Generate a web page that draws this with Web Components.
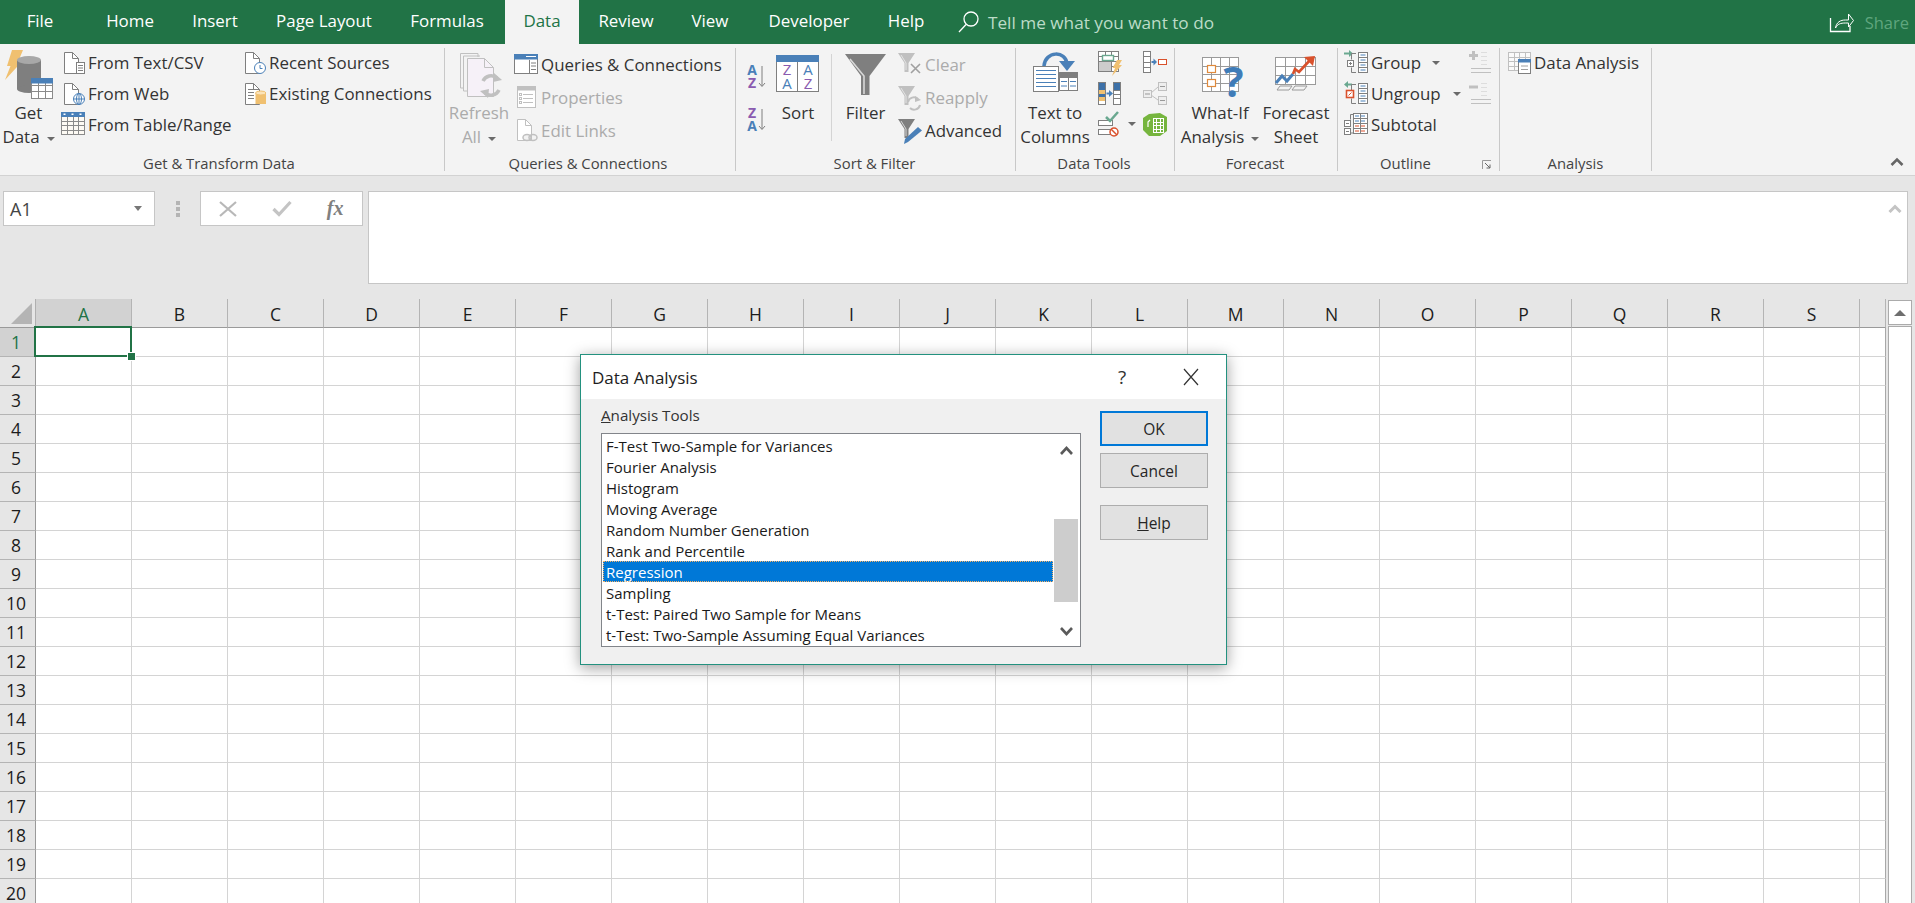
<!DOCTYPE html>
<html lang="en"><head><meta charset="utf-8"><title>Excel – Data Analysis</title>
<style>
html,body{margin:0;padding:0;height:903px;overflow:hidden;background:#e6e6e6}
body{font-family:"Open Sans","Noto Sans",sans-serif;color:#262626;position:relative}
</style></head><body>
<x-titlebar>
  <x-tab style="width:80px">File</x-tab><x-tab style="width:100px">Home</x-tab><x-tab style="width:70px">Insert</x-tab><x-tab style="width:148px">Page Layout</x-tab><x-tab style="width:98px">Formulas</x-tab><x-tab active style="width:74px;margin-left:9px">Data</x-tab><x-tab style="width:94px">Review</x-tab><x-tab style="width:74px">View</x-tab><x-tab style="width:124px">Developer</x-tab><x-tab style="width:70px">Help</x-tab>
</x-titlebar>
<x-ribbon>
  <x-group label="Get &amp; Transform Data" style="width:445px;--lp:6px">
    <x-large icon="getdata" style="width:57px">Get<br>Data<x-caret></x-caret></x-large>
    <x-col style="margin:-1px 0 0 4px;width:181px"><x-small icon="fromtext">From Text/CSV</x-small><x-small icon="fromweb">From Web</x-small><x-small icon="fromtable">From Table/Range</x-small></x-col>
    <x-col style="margin-top:-1px"><x-small icon="recent">Recent Sources</x-small><x-small icon="existing">Existing Connections</x-small></x-col>
  </x-group>
  <x-group label="Queries &amp; Connections" style="width:291px;--lp:4px">
    <x-large icon="refresh" disabled style="width:68px">Refresh<br>All<x-caret></x-caret></x-large>
    <x-col style="margin-left:1px;--row:33px"><x-small icon="queries">Queries &amp; Connections</x-small><x-small icon="properties" disabled>Properties</x-small><x-small icon="editlinks" disabled>Edit Links</x-small></x-col>
  </x-group>
  <x-group label="Sort &amp; Filter" style="width:280px;--lp:2px">
    <x-col style="margin:6px 0 0 9px;--row:43px"><x-icon name="az"></x-icon><x-icon name="za"></x-icon></x-col>
    <x-large icon="sort" style="width:44px;margin-left:10px">Sort</x-large>
    <x-vrule style="margin:6px 13px 0 11px"></x-vrule>
    <x-large icon="filter" style="width:41px">Filter</x-large>
    <x-col style="margin-left:12px;--row:33px"><x-small icon="clear" disabled>Clear</x-small><x-small icon="reapply" disabled>Reapply</x-small><x-small icon="advanced">Advanced</x-small></x-col>
  </x-group>
  <x-group label="Data Tools" style="width:159px;--lp:2px">
    <x-large icon="textcol" style="width:70px;margin-left:4px">Text to<br>Columns</x-large>
    <x-col style="margin:-2px 0 0 8px;width:45px"><x-icon name="flash"></x-icon><x-icon name="dupes"></x-icon><x-row><x-icon name="valid"></x-icon><x-caret style="margin-left:6px"></x-caret></x-row></x-col>
    <x-col style="margin-top:-2px"><x-icon name="consol"></x-icon><x-icon name="relat"></x-icon><x-icon name="model"></x-icon></x-col>
  </x-group>
  <x-group label="Forecast" style="width:163px;--lp:2px">
    <x-large icon="whatif" style="width:80px;margin-left:5px">What-If<br>Analysis<x-caret></x-caret></x-large>
    <x-large icon="fsheet" style="width:72px">Forecast<br>Sheet</x-large>
  </x-group>
  <x-group label="Outline" launcher style="width:162px;--lp:26px">
    <x-col style="margin:-1px 0 0 6px;width:125px"><x-small icon="group" caret style="width:96px">Group</x-small><x-small icon="ungroup" caret style="width:117px">Ungroup</x-small><x-small icon="subtotal">Subtotal</x-small></x-col>
    <x-col style="margin-top:-1px"><x-icon name="showd"></x-icon><x-icon name="hided"></x-icon></x-col>
  </x-group>
  <x-group label="Analysis" style="width:152px;--lp:0px">
    <x-col style="margin:-1px 0 0 7px"><x-small icon="analysis">Data Analysis</x-small></x-col>
  </x-group>
  <x-collapse></x-collapse>
</x-ribbon>
<x-formulabar></x-formulabar>
<x-sheet></x-sheet>
<x-dialog heading="Data Analysis">
  <x-button slot="buttons" focused>OK</x-button>
  <x-button slot="buttons">Cancel</x-button>
  <x-button slot="buttons" style="margin-top:10px"><u>H</u>elp</x-button>
</x-dialog>
<script>
const G='#7f7f7f',B='#4a80b8',P='#8a5bb0',O='#f0c070',T='#6aa890',R='#d9512c',L='#c0c0c0';
const FF='"Open Sans","Noto Sans",sans-serif';
const r=(x,y,w,h,f,s,sw=1)=>`<rect x="${x}" y="${y}" width="${w}" height="${h}" fill="${f||'none'}"${s?` stroke="${s}" stroke-width="${sw}"`:''}/>`;
const l=(d,s,sw=1)=>`<path d="${d}" fill="none" stroke="${s}" stroke-width="${sw}"/>`;
const pg=(pts,f)=>`<polygon points="${pts}" fill="${f}"/>`;
const c=(x,y,rd,f,s,sw=1)=>`<circle cx="${x}" cy="${y}" r="${rd}" fill="${f||'none'}"${s?` stroke="${s}" stroke-width="${sw}"`:''}/>`;
const t=(x,y,str,f,sz,wt=700)=>`<text x="${x}" y="${y}" fill="${f}" font-size="${sz}" font-weight="${wt}" font-family='${FF}' text-anchor="middle">${str}</text>`;
const doc=(x,y,w,h,s=G,f='#fff',fd=6)=>`<path d="M${x} ${y}H${x+w-fd}L${x+w} ${y+fd}V${y+h}H${x}Z" fill="${f}" stroke="${s}"/><path d="M${x+w-fd} ${y}V${y+fd}H${x+w}" fill="none" stroke="${s}"/>`;
const grid=(x,y,w,h,cs,rs,s=G,f='#fff')=>{let o=r(x,y,w,h,f,s);for(let i=1;i<cs;i++){const X=x+Math.round(w*i/cs);o+=l(`M${X} ${y}V${y+h}`,s)}for(let i=1;i<rs;i++){const Y=y+Math.round(h*i/rs);o+=l(`M${x} ${Y}H${x+w}`,s)}return o};
const funnel=(x,y,f)=>pg(`${x},${y} ${x+17},${y} ${x+10.5},${y+10} ${x+10.5},${y+19} ${x+6.5},${y+19} ${x+6.5},${y+10}`,f)+l(`M${x+3} ${y+2}L${x+8} ${y+10}V${y+17}`,'#eee',.8);
const lines=(x,ys,w,s=G)=>ys.map(y=>l(`M${x} ${y}h${w}`,s)).join('');
const outlineCol=(x,y)=>r(x+.5,y+.5,9,20,'#fff',G)+l(`M${x} ${y+5.5}h10M${x} ${y+10.5}h10M${x} ${y+15.5}h10`,G)+l(`M${x+2.5} ${y+3}h5M${x+2.5} ${y+8}h5M${x+2.5} ${y+13}h5M${x+2.5} ${y+18}h5`,B,1.2);
const ICONS={
 getdata:['0 48 58 53',pg('12,50 23,50 18,62 21.5,62 5,80 10.5,66 7,66',O)+r(17,60,24,29,'#7f7f7f')+`<ellipse cx="29" cy="89" rx="12" ry="4" fill="#7f7f7f"/><ellipse cx="29" cy="60" rx="12" ry="4" fill="#a8a8a8"/>`+grid(31.5,78.5,21,20,3,3,'#8a8a8a')+r(31,78,22,5.5,B)],
 fromtext:['61 50 24 26',doc(64.5,52.5,14,21)+r(76.5,62.5,8,11,'#fff',G)+lines(78,[65.5,68,70.5],5)],
 fromweb:['61 81 24 26',doc(64.5,83.5,14,21)+c(79,99,5.5,'#fff',B)+l('M73.5 99h11M79 93.5v11',B)+`<ellipse cx="79" cy="99" rx="2.5" ry="5.5" fill="none" stroke="${B}"/>`],
 fromtable:['61 112 24 26',grid(61.5,112.5,23,22,4,5,'#8a8a8a','#fdfaf4')+r(61,112,24,5,B)+r(63.5,113.5,2,1.5,'#fff')+r(71.5,113.5,2,1.5,'#fff')+r(79.5,113.5,2,1.5,'#fff')],
 recent:['242 50 24 26',doc(245.5,52.5,14,21)+c(260,68,5.5,'#fff',B)+l('M260 65v3.5h2.5',B)],
 existing:['242 81 24 26',doc(245.5,83.5,14,21)+lines(248,[89.5,92.5,95.5,98.5],6)+r(255.5,93,10.5,11,O)+`<ellipse cx="260.7" cy="93" rx="5.2" ry="2" fill="#fbe3b8" stroke="${O}"/>`],
 refresh:['445 48 68 53',l('M460.5 53.5H478V57M460.5 53.5V88H464',L)+l('M463.5 56H480M463.5 56V91H467',L)+doc(467.5,58.5,26,38,L,'#f6f1f8',9)+l('M483 81a9 9 0 0 1 14-3',L,3.5)+pg('494,73 502,80 493,82',L)+l('M499 90a9 9 0 0 1-14 3',L,3.5)+pg('488,98 480,91 489,89',L)],
 queries:['514 52 24 26',r(514.5,54.5,23,19,'#fff',G)+r(514,54,24,5.5,B)+l('M526 56.5h10','#fff',1)+l('M529.5 60v13',G)+lines(531,[63,66,69.5],5)],
 properties:['514 85 24 26',r(517.5,86.5,18,21,'#fff',L)+r(517,86,19,4.5,L)+r(519.5,93.5,2,2,'none',L)+r(519.5,97.5,2,2,'none',L)+r(519.5,101.5,2,2,'none',L)+lines(523,[94.5,98.5,102.5],10,L)],
 editlinks:['514 118 24 26',doc(517.5,119.5,14,21,L)+`<ellipse cx="527" cy="137.5" rx="4" ry="3" fill="#f3f3f3" stroke="${L}" stroke-width="1.5"/><ellipse cx="533" cy="137.5" rx="4" ry="3" fill="none" stroke="${L}" stroke-width="1.5"/>`],
 az:['745 64 21 24',t(752,75,'A',B,14)+t(752,87.5,'Z',P,14)+l('M762 66V86',G)+l('M759 83l3 3.5 3-3.5',G)],
 za:['745 107 21 24',t(752,118,'Z',P,14)+t(752,130.5,'A',B,14)+l('M762 109V129',G)+l('M759 126l3 3.5 3-3.5',G)],
 sort:['776 48 44 53',r(776.5,55.5,42,36,'#fff',G)+r(776,55,43,7,B)+l('M797.5 62V91',G)+t(787,75,'Z',P,15,400)+t(787,89,'A',B,15,400)+t(808,75,'A',B,15,400)+t(808,89,'Z',P,15,400)],
 filter:['845 48 41 53',pg('845,54 886,54 869.5,76 869.5,95 861,95 861,76',G)+l('M850 59L864 76V94','#d8d8d8',1.6)],
 clear:['898 52 24 26',funnel(898,53,L)+l('M911 64l9 9M920 64l-9 9','#a0a0a0',1.6)],
 reapply:['898 85 24 26',funnel(898,86,L)+l('M908 102a6 6 0 0 1 10-3',L,2)+pg('915,96 921,100 915,102',L)+l('M920 105a6 6 0 0 1-10 3',L,2)],
 advanced:['898 118 24 26',funnel(898,119,G)+pg('918,127 922,130.5 908,142 904,144 905,139',B)],
 textcol:['1020 48 70 53',r(1033.5,66.5,25,25,'#fff',G)+lines(1036,[70.5,74.5,78.5,82.5,86.5],20,B)+r(1059.5,75.5,18,15,'#fff',G)+r(1059,72,19,6,G)+l('M1068.5 78v12',G)+lines(1061,[81.5,86],6,B)+lines(1070,[81.5,86],6,B)+l('M1044 66C1045 51 1066 50 1067 64',B,3.5)+pg('1059,61 1075,61 1067,71',B)],
 flash:['1098 49 24 26',grid(1098.5,51.5,20,20,3,4,G)+r(1098.5,61.5,13,10,'#ccc',G)+r(1102.5,55.5,11,5,'#fff',T,1.4)+pg('1117,60 1122,60 1119,65 1122,65 1112,76 1115,68 1112.5,68',O)],
 dupes:['1098 80 24 26',r(1098.5,82.5,7,22,'#fff',G)+r(1099,83,6,7,'#3d71a8')+r(1099,90,6,4,O)+r(1099,94,6,3,'#3d71a8')+r(1099,97,6,4,O)+r(1113.5,82.5,7,22,'#fff',G)+r(1114,83,6,7,'#3d71a8')+lines(1113,[90.5,94.5,98.5],8,G)+l('M1106.5 93.5h4',B,2)+pg('1109,90 1113,93.5 1109,97',B)],
 valid:['1098 110 24 26',r(1098.5,119.5,14,5,'#fff',G)+r(1098.5,128.5,14,5,'#fff',G)+l('M1106 116l4 4 8-9',T,2.5)+c(1114,131,4,'#fff',R,1.5)+l('M1111 128l6 6',R,1.5)],
 consol:['1143 49 24 26',grid(1143.5,51.5,7,21,1,4,G)+l('M1151.5 62h3',B,2)+pg('1153.5,58.5 1157,62 1153.5,65.5',B)+r(1158.5,59.5,8,5,'#fff',R)],
 relat:['1143 80 24 26',r(1143.5,90.5,8,7,'#eee',L)+r(1158.5,82.5,8,8,'#eee',L)+r(1158.5,96.5,8,8,'#eee',L)+l('M1151 93l7-6M1151 95l7 5',L)+lines(1145,[94],5,'#999')+lines(1160,[86.5,100.5],5,'#999')],
 model:['1143 110 24 26',pg('1149,113 1160,112 1167,116 1167,130 1160,135 1149,135 1143,129 1143,117','#76b53e')+grid(1153.5,117.5,10,14,3,4,'#fff','none')+l('M1148 126v-5l2-2','#fff',1.2)],
 whatif:['1180 48 80 53',grid(1202.5,57.5,36,34,4,4,'#9a9a9a')+r(1207.5,65.5,8,7,'#fff','#e08a3c',1.2)+r(1207.5,79.5,8,7,'#fff','#e08a3c',1.2)+t(1233.5,97,'?','#3f7cb8',42)],
 fsheet:['1260 48 72 53',grid(1275.5,57.5,40,27,4,3,'#9a9a9a')+l('M1277 90l3-4h12l-3 4zM1292 90l3-4h12l-3 4z','#9a9a9a')+l('M1276 83l6-7 5 5 6-7',B,3)+l('M1293 74l2-5 4 3 12-13',R,2.6)+pg('1304,57 1315,56 1313,66',R)],
 group:['1344 50 24 26',l('M1344 53.5h6',T,2)+pg('1349,50 1353,53.5 1349,57',T)+outlineCol(1358,52)+l('M1356 53.5h-4.5v6M1351.5 67.5v5h4.5',G)+r(1347.5,60.5,6,6,'#fff',G)+l('M1349 63.5h3M1350.5 62v3',G)],
 ungroup:['1344 81 24 26',l('M1346 84.5h6',T,2)+pg('1348,81 1344,84.5 1348,88',T)+outlineCol(1358,83)+l('M1356 84.5h-4.5v6M1351.5 98.5v5h4.5',G)+r(1346.5,90.5,7,7,'#fff',R,1.6)+l('M1348.5 95.5l3-3',R)],
 subtotal:['1344 112 24 26',l('M1354 114.5h-3.5v5M1350.5 128v5h3.5',G)+r(1344.5,120.5,6,6,'#fff',G)+r(1344.5,128.5,6,6,'#fff',G)+grid(1353.5,113.5,14,20,2,4,G)+lines(1355,[116,121],4,B)+lines(1361,[116,121],4,B)+lines(1355,[126,131],4,R)+lines(1361,[126,131],4,R)+l('M1346 123.5h3M1346 131.5h3',G)],
 showd:['1469 50 24 26',l('M1469 55.5h9M1473.5 51v9',L,3)+lines(1481,[52.5,56.5,60.5,64.5],6,'#ddd')+lines(1471,[68.5,72.5],20,L)],
 hided:['1469 81 24 26',l('M1469 87h9',L,3)+lines(1481,[83.5,87.5,91.5,95.5],6,'#ddd')+lines(1471,[99.5,103.5],20,L)],
 analysis:['1507 50 24 26',grid(1508.5,52.5,22,18,4,4,L,'#fafafa')+r(1518.5,59.5,12,14,'#fff',G)+r(1518,59,13,3.5,B)+lines(1521,[66,69.5],7,'#a0a0a0')],
 search:['957 8 26 26',c(971,18,7,'none','#fff',1.3)+l('M966 23.5L959 31','#fff',1.3)],
 share:['1828 10 28 26',l('M1830.5 19V32.5H1850V27','#fff',1.3)+l('M1835.5 29c1-6 5-8 10-8h3V15l5 6.5-5 6.5V24h-3c-5 0-8 1-10 5z','#fff',1)]
};
function def(name,css,html,extra){
  const tpl=document.createElement('template');tpl.innerHTML=`<style>${css}</style>${html}`;
  customElements.define(name,class extends HTMLElement{
    constructor(){super();this.attachShadow({mode:'open'}).append(tpl.content.cloneNode(true))}
    connectedCallback(){extra&&extra(this,this.shadowRoot)}
  });
}
def('x-icon',':host{display:block;flex:none;line-height:0}svg{display:block;overflow:visible}','<span></span>',(h,s)=>{
  const d=ICONS[h.getAttribute('name')];if(!d)return;const [vb,body]=d;const [,, w,ht]=vb.split(' ');
  s.querySelector('span').innerHTML=`<svg xmlns="http://www.w3.org/2000/svg" viewBox="${vb}" width="${w}" height="${ht}">${body}</svg>`;
});
def('x-caret',':host{display:inline-block;width:0;height:0;border:4px solid transparent;border-top:4.5px solid #6a6a6a;border-bottom:0;margin-left:7px;vertical-align:2px;flex:none}','');
def('x-tab',`:host{display:flex;align-items:center;justify-content:center;flex:none;height:44px;padding-bottom:4px;box-sizing:border-box;color:#fff;font-size:16.9px}
:host([active]){background:#f3f3f3;color:#217346}`,'<slot></slot>');
def('x-titlebar',`:host{display:flex;height:44px;background:#217346;align-items:stretch}
.search{display:flex;align-items:center;margin-left:16px;color:#bcdcc8;font-size:17.2px}
.search span{margin-left:5px;padding-top:1px}
.share{margin-left:auto;display:flex;align-items:center;color:#5fa67e;font-size:16.5px;padding-right:6px}
.share span{margin-left:9px}`,`<slot></slot><div class="search"><x-icon name="search"></x-icon><span>Tell me what you want to do</span></div><div class="share"><x-icon name="share"></x-icon><span>Share</span></div>`);
def('x-ribbon',`:host{display:flex;height:132px;box-sizing:border-box;background:#f3f3f3;border-bottom:1px solid #d2d2d2;padding-top:4px;align-items:flex-start;font-size:16.9px}`,'<slot></slot>');
def('x-group',`:host{display:flex;flex-direction:column;flex:none;height:123px;box-sizing:border-box;border-right:1px solid #c8c8c8;position:relative}
.b{display:flex;height:107px;align-items:flex-start}
.l{height:16px;line-height:16px;font-size:14.85px;color:#444;text-align:center;padding-right:var(--lp,0);white-space:nowrap}
.launch{position:absolute;right:8px;bottom:2px;width:9px;height:9px;display:none}
:host([launcher]) .launch{display:block}`,
`<div class="b"><slot></slot></div><div class="l"></div><svg class="launch" viewBox="0 0 9 9"><path d="M.5 9V.5H9" fill="none" stroke="#999"/><path d="M3 3l5 5M8 4.5V8H4.5" fill="none" stroke="#666"/></svg>`,
(h,s)=>{s.querySelector('.l').textContent=h.getAttribute('label')});
def('x-col',`:host{display:grid;flex:none;grid-auto-rows:var(--row,31px);align-items:center}`,'<slot></slot>');
def('x-row',`:host{display:flex;align-items:center}`,'<slot></slot>');
def('x-vrule',`:host{display:block;flex:none;width:1px;height:87px;background:#d4d4d4}`,'');
def('x-small',`:host{display:flex;align-items:center;white-space:nowrap;color:#333}
:host([disabled]){color:#ababab}
.t{margin-left:3px}
x-caret{margin-left:auto;display:none}
:host([caret]) x-caret{display:block}`,`<x-icon></x-icon><span class="t"><slot></slot></span><x-caret></x-caret>`,
(h,s)=>{const i=s.querySelector('x-icon');i.setAttribute('name',h.getAttribute('icon'));i.connectedCallback&&i.connectedCallback()});
def('x-large',`:host{display:block;flex:none;text-align:center;color:#333;white-space:nowrap;line-height:24px}
:host([disabled]){color:#ababab}
x-icon{height:53px;display:flex;justify-content:center}
.lbl{display:block}`,`<x-icon></x-icon><span class="lbl"><slot></slot></span>`,
(h,s)=>{const i=s.querySelector('x-icon');i.setAttribute('name',h.getAttribute('icon'));i.connectedCallback&&i.connectedCallback()});
def('x-collapse',`:host{flex:1;align-self:stretch;display:flex;justify-content:flex-end;align-items:flex-end;padding:0 11px 9px 0}`,
`<svg width="14" height="9" viewBox="0 0 14 9"><path d="M1.5 8L7 2.5 12.5 8" fill="none" stroke="#666" stroke-width="2.6"/></svg>`);
def('x-formulabar',`:host{display:flex;height:123px;box-sizing:border-box;padding:15px 7px 0 3px;align-items:flex-start;background:#e6e6e6;font-size:18px;color:#444}
.box{background:#fff;border:1px solid #c6c6c6;box-sizing:border-box;height:35px;display:flex;align-items:center}
.name{width:152px;padding:0 11px 0 6px;justify-content:space-between}
.dots{width:45px;display:flex;flex-direction:column;align-items:center;gap:2px;height:35px;justify-content:center}
.dots i{display:block;width:4px;height:4px;background:#b4b4b4}
.fn{width:163px;flex:none}
.fn span{flex:1;display:flex;justify-content:center;align-items:center}
.fx{font:italic 700 20px "Liberation Serif",serif;color:#808080}
.input{flex:1;margin-left:5px;height:93px;background:#fff;border:1px solid #c6c6c6;box-sizing:border-box;display:flex;justify-content:flex-end;padding:12px 5px 0 0}`,
`<div class="box name"><span>A1</span><svg width="10" height="6" viewBox="0 0 10 6"><path d="M1 0h8L5 5z" fill="#777"/></svg></div>
<div class="dots"><i></i><i></i><i></i></div>
<div class="box fn"><span><svg width="18" height="16" viewBox="0 0 18 16"><path d="M1 1l16 14M17 1L1 15" stroke="#b8b8b8" stroke-width="2.2" fill="none"/></svg></span><span><svg width="20" height="17" viewBox="0 0 20 17"><path d="M1.5 9l5.5 5.5L18.5 2" stroke="#c4c4c4" stroke-width="3.2" fill="none"/></svg></span><span class="fx">fx</span></div>
<div class="input"><svg width="14" height="9" viewBox="0 0 14 9"><path d="M1.5 8L7 2.5 12.5 8" fill="none" stroke="#c4c4c4" stroke-width="3"/></svg></div>`);
def('x-sheet',`:host{display:flex;height:604px;overflow:hidden;background:#e6e6e6}
.g{display:grid;grid-template-columns:36px repeat(19,96px) 26px;grid-template-rows:29px repeat(20,29px);flex:none;width:1886px}
.g>div{box-sizing:border-box}
.corner{border-right:1px solid #b0b0b0;border-bottom:1px solid #9a9a9a;position:relative}
.corner svg{position:absolute;left:11px;bottom:3px}
.ch{display:flex;align-items:center;justify-content:center;border-right:1px solid #b4b4b4;border-bottom:1px solid #9a9a9a;font-size:17.5px;color:#1c1c1c;padding-top:1px}
.ch.on{background:#d2d2d2;color:#217346}
.rh{display:flex;align-items:center;justify-content:center;border-right:1px solid #9a9a9a;border-bottom:1px solid #b4b4b4;font-size:17.5px;color:#1c1c1c;background:#e6e6e6;padding-right:3px}
.rh.on{background:#d2d2d2;color:#217346}
.c{background:#fff;border-right:1px solid #d4d4d4;border-bottom:1px solid #d4d4d4}
.c.end{border-right-color:#a8a8a8}
.c.sel{position:relative}
.c.sel::after{content:"";position:absolute;left:-2px;top:-2px;right:-1px;bottom:-1px;border:2.5px solid #217346;box-sizing:border-box}
.c.sel::before{content:"";position:absolute;right:-4px;bottom:-4px;width:7px;height:7px;background:#217346;border:1px solid #fff;z-index:1;box-sizing:content-box;margin:-1px}
.sb{flex:1;padding:1px 3px 0 2px;display:flex;flex-direction:column}
.up{height:25px;box-sizing:border-box;background:#fff;border:1px solid #ababab;display:flex;align-items:center;justify-content:center}
.up i{display:block;width:0;height:0;border:6px solid transparent;border-bottom:6px solid #6e6e6e;border-top:0}
.tr{flex:1;background:#fff;border:1px solid #ababab;border-bottom:0;margin-top:1px}`,
`<div class="g"></div><div class="sb"><div class="up"><i></i></div><div class="tr"></div></div>`,
(h,s)=>{const g=s.querySelector('.g');if(g.children.length)return;let o=`<div class="corner"><svg width="21" height="21" viewBox="0 0 21 21"><path d="M21 0V21H0z" fill="#b4b4b4"/></svg></div>`;
 const A='ABCDEFGHIJKLMNOPQRS';for(const x of A)o+=`<div class="ch${x=='A'?' on':''}">${x}</div>`;o+='<div class="ch"></div>';
 for(let y=1;y<=20;y++){o+=`<div class="rh${y==1?' on':''}">${y}</div>`;for(let x=0;x<20;x++)o+=`<div class="c${x==19?' end':''}${x==0&&y==1?' sel':''}"></div>`}
 g.innerHTML=o;});
def('x-button',`:host{display:flex;align-items:center;justify-content:center;box-sizing:border-box;width:108px;height:35px;background:#e1e1e1;border:1px solid #adadad;font-size:15.5px;color:#262626}
:host([focused]){border:2px solid #0078d7}`,'<slot></slot>');
def('x-listbox',`:host{display:flex;width:480px;height:214px;box-sizing:border-box;border:1px solid #82858a;background:#fff;padding:1px 2px 1px 1px;font-size:15px;color:#1a1a1a}
.items{width:450px;flex:none}
.it{height:21px;line-height:22px;padding-left:3px;white-space:nowrap;overflow:hidden}
.it.sel{background:#0078d7;color:#fff;outline:1px dotted #f7b267;outline-offset:-1px}
.sb{width:24px;margin-left:1px;display:flex;flex-direction:column;align-items:stretch}
.a{height:28px;display:flex;align-items:center;justify-content:center;flex:none}
.a.u{height:30px}
.th{height:83px;background:#cdcdcd;margin-top:54px}
.sp{flex:1}`,`<div class="items"></div><div class="sb"><div class="a u"><svg width="13" height="9" viewBox="0 0 13 9"><path d="M1 8l5.5-6 5.5 6" fill="none" stroke="#5a5a5a" stroke-width="2.6"/></svg></div><div class="th"></div><div class="sp"></div><div class="a"><svg width="13" height="9" viewBox="0 0 13 9"><path d="M1 1l5.5 6 5.5-6" fill="none" stroke="#5a5a5a" stroke-width="2.6"/></svg></div></div>`,
(h,s)=>{const it=['F-Test Two-Sample for Variances','Fourier Analysis','Histogram','Moving Average','Random Number Generation','Rank and Percentile','Regression','Sampling','t-Test: Paired Two Sample for Means','t-Test: Two-Sample Assuming Equal Variances'];
 s.querySelector('.items').innerHTML=it.map(x=>`<div class="it${x=='Regression'?' sel':''}">${x}</div>`).join('');});
def('x-dialog',`:host{position:absolute;left:580px;top:354px;width:647px;height:311px;box-sizing:border-box;border:1px solid #23917f;background:#f0f0f0;box-shadow:0 3px 14px rgba(0,0,0,.38);display:flex;flex-direction:column;color:#1e1e1e}
.h{height:44px;background:#fff;display:flex;align-items:center;padding:0 0 0 11px;font-size:17px;flex:none}
.h .tt{flex:1}
.q{width:16px;text-align:center;font-size:19px;color:#333;margin-right:52px}
.x{margin-right:26px;display:block}
.m{display:flex;padding:0 18px 0 20px;gap:19px}
.lab{height:24px;line-height:24px;margin-top:4px;margin-bottom:6px;font-size:15.2px;color:#333}
.btn{display:flex;flex-direction:column;gap:7px;padding-top:12px}`,
`<div class="h"><span class="tt"></span><span class="q">?</span><svg class="x" width="18" height="18" viewBox="0 0 18 18"><path d="M2 1l14 16M16 1L2 17" stroke="#333" stroke-width="1.2" fill="none"/></svg></div>
<div class="m"><div><div class="lab"><u>A</u>nalysis Tools</div><x-listbox></x-listbox></div><div class="btn"><slot name="buttons"></slot></div></div>`,
(h,s)=>{s.querySelector('.tt').textContent=h.getAttribute('heading')});
</script>
</body></html>
